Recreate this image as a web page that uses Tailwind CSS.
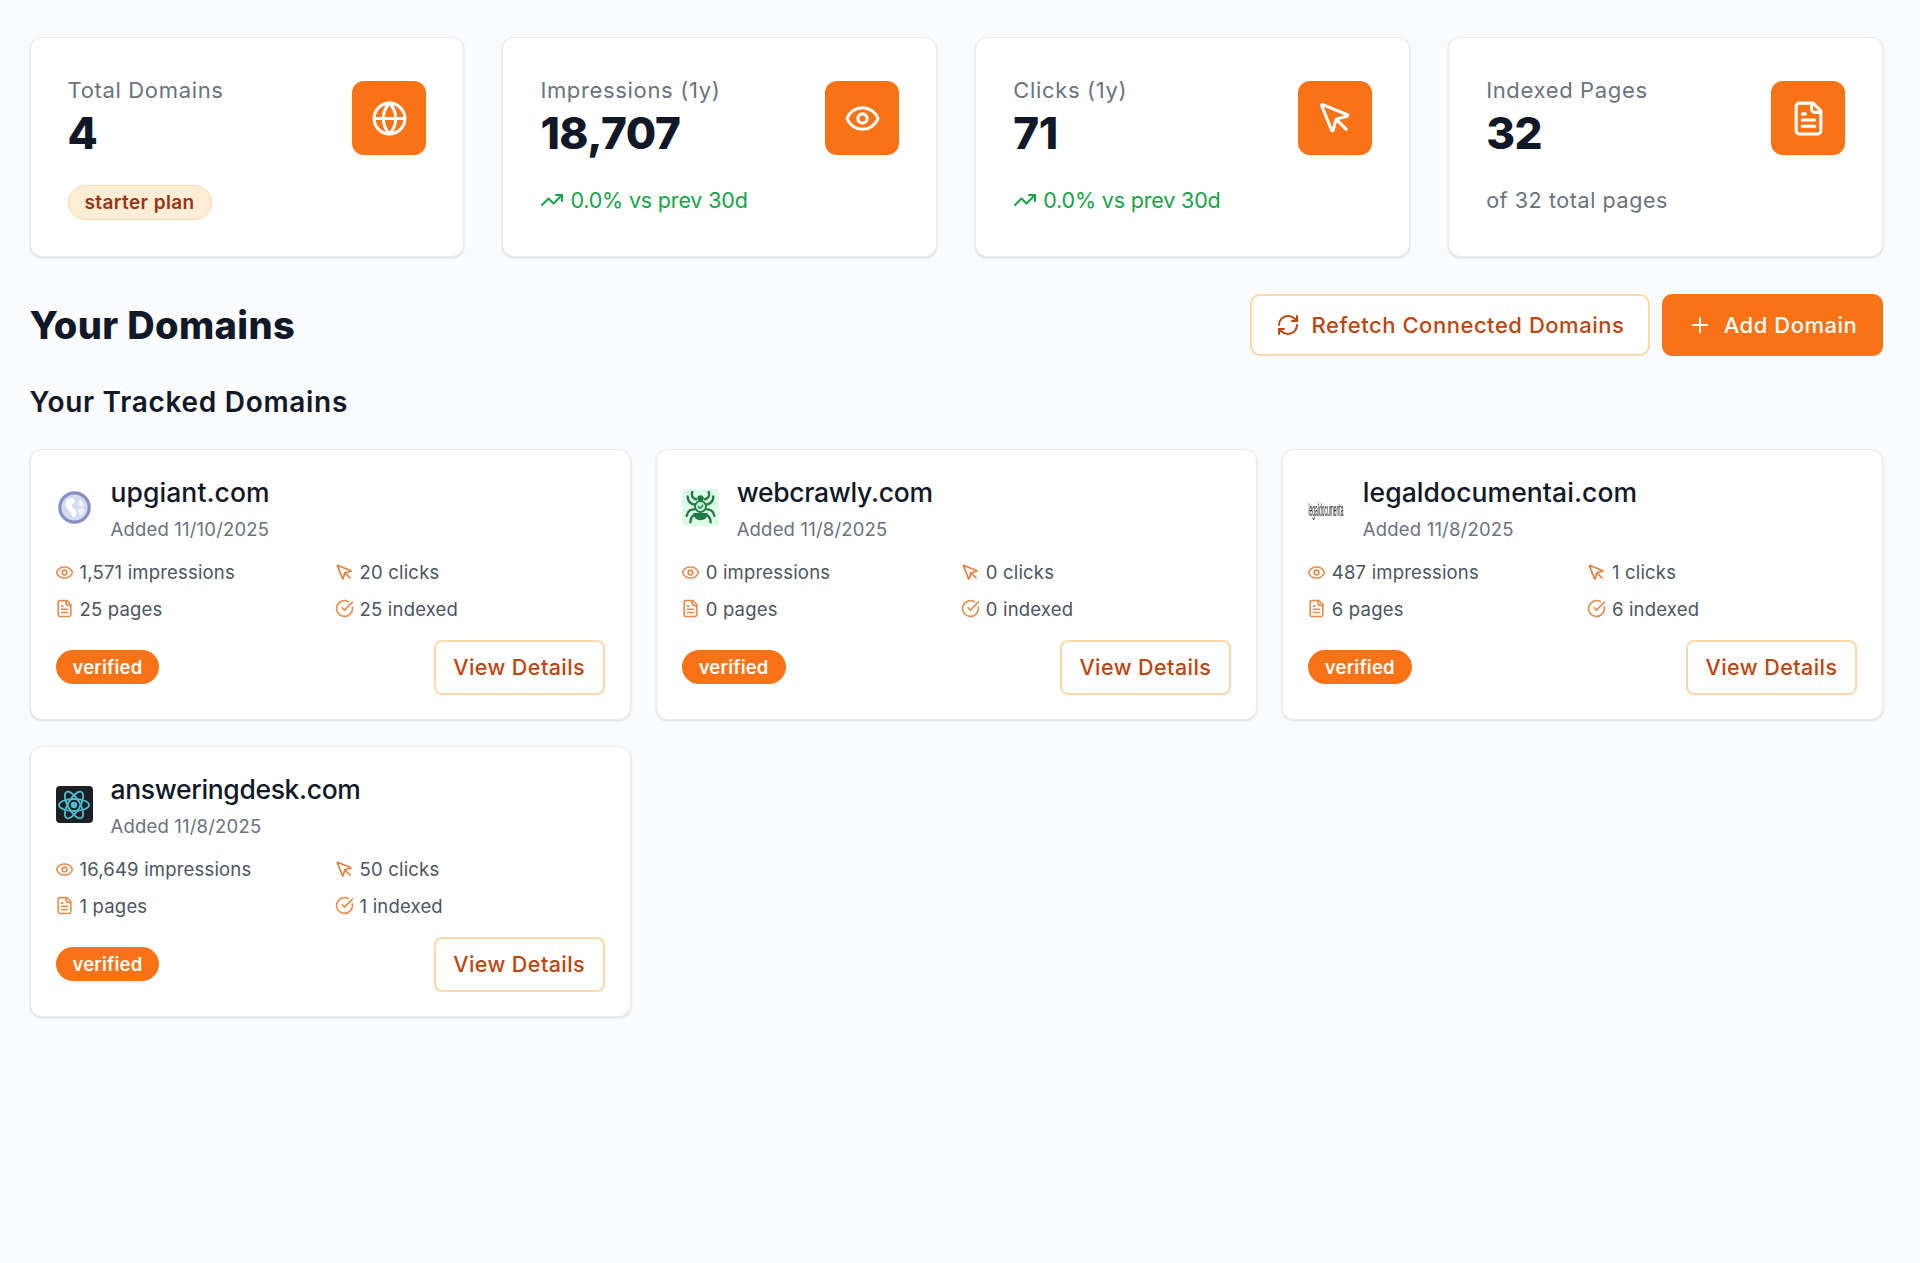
<!DOCTYPE html>
<html lang="en">
<head>
<meta charset="utf-8">
<title>Your Domains</title>
<script src="https://cdn.jsdelivr.net/npm/@tailwindcss/browser@4"></script>
</head>
<body class="bg-[#fafbfc] font-['Inter','Liberation_Sans',sans-serif] text-[#111827]">
<svg class="hidden" aria-hidden="true">
  <symbol id="globe" viewBox="0 0 24 24" fill="none" stroke="currentColor" stroke-width="2" stroke-linecap="round" stroke-linejoin="round"><circle cx="12" cy="12" r="10"/><path d="M12 2a14.5 14.5 0 0 0 0 20 14.5 14.5 0 0 0 0-20"/><path d="M2 12h20"/></symbol>
  <symbol id="eye" viewBox="0 0 24 24" fill="none" stroke="currentColor" stroke-width="2" stroke-linecap="round" stroke-linejoin="round"><path d="M2.062 12.348a1 1 0 0 1 0-.696 10.75 10.75 0 0 1 19.876 0 1 1 0 0 1 0 .696 10.75 10.75 0 0 1-19.876 0"/><circle cx="12" cy="12" r="3"/></symbol>
  <symbol id="pointer" viewBox="0 0 24 24" fill="none" stroke="currentColor" stroke-width="2" stroke-linecap="round" stroke-linejoin="round"><path d="M12.586 12.586 19 19"/><path d="M3.688 3.037a.497.497 0 0 0-.651.651l6.5 15.999a.5.5 0 0 0 .947-.062l1.569-6.083a2 2 0 0 1 1.448-1.479l6.124-1.579a.5.5 0 0 0 .063-.947z"/></symbol>
  <symbol id="file" viewBox="0 0 24 24" fill="none" stroke="currentColor" stroke-width="2" stroke-linecap="round" stroke-linejoin="round"><path d="M15 2H6a2 2 0 0 0-2 2v16a2 2 0 0 0 2 2h12a2 2 0 0 0 2-2V7Z"/><path d="M14 2v4a2 2 0 0 0 2 2h4"/><path d="M10 9H8"/><path d="M16 13H8"/><path d="M16 17H8"/></symbol>
  <symbol id="trend" viewBox="0 0 24 24" fill="none" stroke="currentColor" stroke-width="2" stroke-linecap="round" stroke-linejoin="round"><path d="M16 7h6v6"/><path d="m22 7-8.5 8.5-5-5L2 17"/></symbol>
  <symbol id="refresh" viewBox="0 0 24 24" fill="none" stroke="currentColor" stroke-width="2" stroke-linecap="round" stroke-linejoin="round"><path d="M3 12a9 9 0 0 1 9-9 9.75 9.75 0 0 1 6.74 2.74L21 8"/><path d="M21 3v5h-5"/><path d="M21 12a9 9 0 0 1-9 9 9.75 9.75 0 0 1-6.74-2.74L3 16"/><path d="M8 16H3v5"/></symbol>
  <symbol id="plus" viewBox="0 0 24 24" fill="none" stroke="currentColor" stroke-width="2" stroke-linecap="round" stroke-linejoin="round"><path d="M5 12h14"/><path d="M12 5v14"/></symbol>
  <symbol id="check" viewBox="0 0 24 24" fill="none" stroke="currentColor" stroke-width="2" stroke-linecap="round" stroke-linejoin="round"><path d="M21.801 10A10 10 0 1 1 17 3.335"/><path d="m9 11 3 3L22 4"/></symbol>
</svg>

<main class="pl-[29.5px] pr-[37px] pt-[37px] h-[1263px] overflow-hidden">
  <!-- Stat cards -->
  <section class="grid grid-cols-4 gap-[38px]">
    <div class="h-[220px] bg-white rounded-[12px] border border-[#e9ebef] shadow-sm px-[37px] pt-[38px]">
      <div class="flex justify-between">
        <div>
          <p class="text-[22px] leading-[28px] text-[#6b7280] tracking-[0.03em]">Total Domains</p>
          <p class="mt-[4px] text-[44px] leading-[50px] font-extrabold tracking-[-0.01em]">4</p>
        </div>
        <div class="mt-[5px] w-[74px] h-[74px] rounded-[12px] bg-[#f97316] text-white flex items-center justify-center"><svg class="w-[37px] h-[37px]"><use href="#globe"/></svg></div>
      </div>
      <span class="inline-block mt-[27px] rounded-full border border-[#fed7aa] bg-[#ffedd5] px-[16px] text-[19px] leading-[33px] font-semibold tracking-[0.02em] text-[#9a3412]">starter plan</span>
    </div>
    <div class="h-[220px] bg-white rounded-[12px] border border-[#e9ebef] shadow-sm px-[37px] pt-[38px]">
      <div class="flex justify-between">
        <div>
          <p class="text-[22px] leading-[28px] text-[#6b7280] tracking-[0.03em]">Impressions (1y)</p>
          <p class="mt-[4px] text-[44px] leading-[50px] font-extrabold tracking-[-0.01em]">18,707</p>
        </div>
        <div class="mt-[5px] w-[74px] h-[74px] rounded-[12px] bg-[#f97316] text-white flex items-center justify-center"><svg class="w-[37px] h-[37px]"><use href="#eye"/></svg></div>
      </div>
      <p class="mt-[25px] flex items-center gap-[6px] text-[21.5px] leading-[34px] tracking-[-0.008em] text-[#16a34a]"><svg class="w-[24px] h-[24px]"><use href="#trend"/></svg>0.0% vs prev 30d</p>
    </div>
    <div class="h-[220px] bg-white rounded-[12px] border border-[#e9ebef] shadow-sm px-[37px] pt-[38px]">
      <div class="flex justify-between">
        <div>
          <p class="text-[22px] leading-[28px] text-[#6b7280] tracking-[0.03em]">Clicks (1y)</p>
          <p class="mt-[4px] text-[44px] leading-[50px] font-extrabold tracking-[-0.01em]">71</p>
        </div>
        <div class="mt-[5px] w-[74px] h-[74px] rounded-[12px] bg-[#f97316] text-white flex items-center justify-center"><svg class="w-[37px] h-[37px]"><use href="#pointer"/></svg></div>
      </div>
      <p class="mt-[25px] flex items-center gap-[6px] text-[21.5px] leading-[34px] tracking-[-0.008em] text-[#16a34a]"><svg class="w-[24px] h-[24px]"><use href="#trend"/></svg>0.0% vs prev 30d</p>
    </div>
    <div class="h-[220px] bg-white rounded-[12px] border border-[#e9ebef] shadow-sm px-[37px] pt-[38px]">
      <div class="flex justify-between">
        <div>
          <p class="text-[22px] leading-[28px] text-[#6b7280] tracking-[0.03em]">Indexed Pages</p>
          <p class="mt-[4px] text-[44px] leading-[50px] font-extrabold tracking-[-0.01em]">32</p>
        </div>
        <div class="mt-[5px] w-[74px] h-[74px] rounded-[12px] bg-[#f97316] text-white flex items-center justify-center"><svg class="w-[37px] h-[37px]"><use href="#file"/></svg></div>
      </div>
      <p class="mt-[25px] text-[21.5px] leading-[34px] tracking-[0.027em] text-[#6b7280]">of 32 total pages</p>
    </div>
  </section>

  <!-- Header row -->
  <div class="mt-[37px] flex items-center justify-between">
    <h1 class="text-[38px] leading-[62px] font-extrabold tracking-[0.01em]">Your Domains</h1>
    <div class="flex gap-[12px]">
      <button class="h-[62px] w-[400px] rounded-[10px] border-2 border-[#fed7aa] bg-white flex items-center justify-center gap-[12px] text-[22px] font-medium tracking-[0.024em] text-[#bf4510]"><svg class="w-[24px] h-[24px]"><use href="#refresh"/></svg>Refetch Connected Domains</button>
      <button class="h-[62px] w-[221px] rounded-[10px] bg-[#f97316] flex items-center justify-center gap-[12px] text-[22px] font-medium tracking-[0.024em] text-white"><svg class="w-[24px] h-[24px]"><use href="#plus"/></svg>Add Domain</button>
    </div>
  </div>

  <h2 class="mt-[28px] text-[28px] leading-[36px] font-semibold tracking-[0.025em]">Your Tracked Domains</h2>

  <!-- Domain cards -->
  <section class="mt-[29px] grid grid-cols-3 gap-x-[25px] gap-y-[26px]">
    <article class="h-[271px] bg-white rounded-[12px] border border-[#e9ebef] shadow-sm px-[25px] pt-[24px]">
      <div class="flex gap-[18px] items-start">
        <div class="mt-[15px] w-[37px] h-[37px] shrink-0 flex items-center justify-center">
          <svg class="w-[33px] h-[33px] blur-[0.6px]" viewBox="0 0 36 36"><circle cx="18" cy="18" r="16" fill="#d5daf0" stroke="#8590c8" stroke-width="3.5"/><path d="M9 10c4-3 8-3 9 0s-4 4-3 7 6 3 5 7-2 5-3 5c-3-3-4-7-6-9s-4-6-2-10z" fill="#fff"/><path d="M24 9l5 6-4 3-3-4z" fill="#f2f4fb"/><path d="M21 20l7-2 1 4-5 6z" fill="#eef0fa"/></svg>
        </div>
        <div>
          <h3 class="text-[26.5px] leading-[37px] font-medium tracking-[0.003em] text-[#111827]">upgiant.com</h3>
          <p class="text-[18.5px] leading-[36px] text-[#6b7280] tracking-[0.01em]">Added 11/10/2025</p>
        </div>
      </div>
      <ul class="mt-[7px] grid grid-cols-2 gap-x-[11px] text-[18.5px] leading-[36.5px] tracking-[0.01em] text-[#4b5563]">
        <li class="flex items-center gap-[6px]"><svg class="w-[19px] h-[19px] -ml-[1px] text-[#ea8a4a] shrink-0"><use href="#eye"/></svg>1,571 impressions</li>
        <li class="flex items-center gap-[6px]"><svg class="w-[19px] h-[19px] -ml-[1px] text-[#ea7a3a] shrink-0"><use href="#pointer"/></svg>20 clicks</li>
        <li class="flex items-center gap-[6px]"><svg class="w-[19px] h-[19px] -ml-[1px] text-[#ea8a4a] shrink-0"><use href="#file"/></svg>25 pages</li>
        <li class="flex items-center gap-[6px]"><svg class="w-[19px] h-[19px] -ml-[1px] text-[#ea8a4a] shrink-0"><use href="#check"/></svg>25 indexed</li>
      </ul>
      <div class="mt-[12.5px] flex items-center justify-between">
        <span class="rounded-full bg-[#f97316] px-[17px] text-[18.5px] leading-[34px] font-semibold tracking-[0.01em] text-white">verified</span>
        <button class="h-[55px] w-[171px] rounded-[8px] border-2 border-[#fed7aa] bg-white text-[21.5px] font-medium tracking-[0.02em] text-[#bf4510]">View Details</button>
      </div>
    </article>

    <article class="h-[271px] bg-white rounded-[12px] border border-[#e9ebef] shadow-sm px-[25px] pt-[24px]">
      <div class="flex gap-[18px] items-start">
        <div class="mt-[15px] w-[37px] h-[37px] shrink-0 bg-[#dcfce7] rounded-[3px] flex items-center justify-center">
          <svg class="w-[33px] h-[33px] blur-[0.4px]" viewBox="0 0 36 36" fill="none" stroke="#217a45" stroke-width="2.6" stroke-linecap="round"><path d="M10 24a8 8 0 0 0 16 0z" fill="#217a45" stroke="none"/><circle cx="18" cy="8" r="3.5" fill="#217a45" stroke="none"/><circle cx="18" cy="17" r="6" fill="#bbf7d0" stroke="#217a45" stroke-width="2"/><path d="M15.5 17l2 2 3-3.5" stroke="#217a45" stroke-width="1.4"/><path d="M13 9C9 8 8 5 9 1M12 15C7 14 4 11 4 6M11 20c-4 0-7 2-8 7M12 26c-3 1-5 3-5 8M23 9c4-1 5-4 4-8M24 15c5-1 8-4 8-9M25 20c4 0 7 2 8 7M24 26c3 1 5 3 5 8"/></svg>
        </div>
        <div>
          <h3 class="text-[26.5px] leading-[37px] font-medium tracking-[-0.011em] text-[#111827]">webcrawly.com</h3>
          <p class="text-[18.5px] leading-[36px] text-[#6b7280] tracking-[0.01em]">Added 11/8/2025</p>
        </div>
      </div>
      <ul class="mt-[7px] grid grid-cols-2 gap-x-[11px] text-[18.5px] leading-[36.5px] tracking-[0.01em] text-[#4b5563]">
        <li class="flex items-center gap-[6px]"><svg class="w-[19px] h-[19px] -ml-[1px] text-[#ea8a4a] shrink-0"><use href="#eye"/></svg>0 impressions</li>
        <li class="flex items-center gap-[6px]"><svg class="w-[19px] h-[19px] -ml-[1px] text-[#ea7a3a] shrink-0"><use href="#pointer"/></svg>0 clicks</li>
        <li class="flex items-center gap-[6px]"><svg class="w-[19px] h-[19px] -ml-[1px] text-[#ea8a4a] shrink-0"><use href="#file"/></svg>0 pages</li>
        <li class="flex items-center gap-[6px]"><svg class="w-[19px] h-[19px] -ml-[1px] text-[#ea8a4a] shrink-0"><use href="#check"/></svg>0 indexed</li>
      </ul>
      <div class="mt-[12.5px] flex items-center justify-between">
        <span class="rounded-full bg-[#f97316] px-[17px] text-[18.5px] leading-[34px] font-semibold tracking-[0.01em] text-white">verified</span>
        <button class="h-[55px] w-[171px] rounded-[8px] border-2 border-[#fed7aa] bg-white text-[21.5px] font-medium tracking-[0.02em] text-[#bf4510]">View Details</button>
      </div>
    </article>

    <article class="h-[271px] bg-white rounded-[12px] border border-[#e9ebef] shadow-sm px-[25px] pt-[24px]">
      <div class="flex gap-[18px] items-start">
        <div class="mt-[15px] w-[37px] h-[37px] shrink-0">
          <svg class="w-[37px] h-[37px] blur-[0.4px]" viewBox="0 0 142 37" preserveAspectRatio="none"><text x="2" y="27.5" font-family="Liberation Sans, sans-serif" font-size="19" fill="#222">legaldocumenta</text></svg>
        </div>
        <div>
          <h3 class="text-[26.5px] leading-[37px] font-medium tracking-[0.003em] text-[#111827]">legaldocumentai.com</h3>
          <p class="text-[18.5px] leading-[36px] text-[#6b7280] tracking-[0.01em]">Added 11/8/2025</p>
        </div>
      </div>
      <ul class="mt-[7px] grid grid-cols-2 gap-x-[11px] text-[18.5px] leading-[36.5px] tracking-[0.01em] text-[#4b5563]">
        <li class="flex items-center gap-[6px]"><svg class="w-[19px] h-[19px] -ml-[1px] text-[#ea8a4a] shrink-0"><use href="#eye"/></svg>487 impressions</li>
        <li class="flex items-center gap-[6px]"><svg class="w-[19px] h-[19px] -ml-[1px] text-[#ea7a3a] shrink-0"><use href="#pointer"/></svg>1 clicks</li>
        <li class="flex items-center gap-[6px]"><svg class="w-[19px] h-[19px] -ml-[1px] text-[#ea8a4a] shrink-0"><use href="#file"/></svg>6 pages</li>
        <li class="flex items-center gap-[6px]"><svg class="w-[19px] h-[19px] -ml-[1px] text-[#ea8a4a] shrink-0"><use href="#check"/></svg>6 indexed</li>
      </ul>
      <div class="mt-[12.5px] flex items-center justify-between">
        <span class="rounded-full bg-[#f97316] px-[17px] text-[18.5px] leading-[34px] font-semibold tracking-[0.01em] text-white">verified</span>
        <button class="h-[55px] w-[171px] rounded-[8px] border-2 border-[#fed7aa] bg-white text-[21.5px] font-medium tracking-[0.02em] text-[#bf4510]">View Details</button>
      </div>
    </article>

    <article class="h-[271px] bg-white rounded-[12px] border border-[#e9ebef] shadow-sm px-[25px] pt-[24px]">
      <div class="flex gap-[18px] items-start">
        <div class="mt-[15px] w-[37px] h-[37px] shrink-0 bg-[#1c2024] rounded-[4px] flex items-center justify-center">
          <svg class="w-[36px] h-[36px] blur-[0.3px]" viewBox="0 0 36 36" fill="none" stroke="#4fbdd4" stroke-width="1.8"><ellipse cx="18" cy="18" rx="15" ry="6"/><ellipse cx="18" cy="18" rx="15" ry="6" transform="rotate(60 18 18)"/><ellipse cx="18" cy="18" rx="15" ry="6" transform="rotate(120 18 18)"/><circle cx="18" cy="18" r="3.2" fill="#4fbdd4" stroke="none"/></svg>
        </div>
        <div>
          <h3 class="text-[26.5px] leading-[37px] font-medium tracking-[-0.013em] text-[#111827]">answeringdesk.com</h3>
          <p class="text-[18.5px] leading-[36px] text-[#6b7280] tracking-[0.01em]">Added 11/8/2025</p>
        </div>
      </div>
      <ul class="mt-[7px] grid grid-cols-2 gap-x-[11px] text-[18.5px] leading-[36.5px] tracking-[0.01em] text-[#4b5563]">
        <li class="flex items-center gap-[6px]"><svg class="w-[19px] h-[19px] -ml-[1px] text-[#ea8a4a] shrink-0"><use href="#eye"/></svg>16,649 impressions</li>
        <li class="flex items-center gap-[6px]"><svg class="w-[19px] h-[19px] -ml-[1px] text-[#ea7a3a] shrink-0"><use href="#pointer"/></svg>50 clicks</li>
        <li class="flex items-center gap-[6px]"><svg class="w-[19px] h-[19px] -ml-[1px] text-[#ea8a4a] shrink-0"><use href="#file"/></svg>1 pages</li>
        <li class="flex items-center gap-[6px]"><svg class="w-[19px] h-[19px] -ml-[1px] text-[#ea8a4a] shrink-0"><use href="#check"/></svg>1 indexed</li>
      </ul>
      <div class="mt-[12.5px] flex items-center justify-between">
        <span class="rounded-full bg-[#f97316] px-[17px] text-[18.5px] leading-[34px] font-semibold tracking-[0.01em] text-white">verified</span>
        <button class="h-[55px] w-[171px] rounded-[8px] border-2 border-[#fed7aa] bg-white text-[21.5px] font-medium tracking-[0.02em] text-[#bf4510]">View Details</button>
      </div>
    </article>
  </section>
</main>
</body>
</html>
